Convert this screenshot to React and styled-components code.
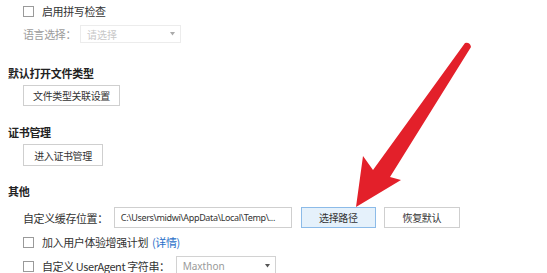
import * as React from "react";
import styled, { createGlobalStyle } from "styled-components";

const GlobalStyle = createGlobalStyle`
	html, body {
		margin: 0;
		padding: 0;
		background: #ffffff;
	}
	body {
		font-family: "Noto Sans CJK SC", "Noto Sans", sans-serif;
		color: #333333;
	}
`;

const Page = styled.div`
	position: relative;
	width: 547px;
	height: 273px;
	overflow: hidden;
	padding-left: 8px;
	box-sizing: border-box;
	display: flex;
	flex-direction: column;
`;

const Row = styled.div`
	display: flex;
	align-items: center;
	height: ${({ $h }) => $h}px;
	margin-top: ${({ $mt }) => $mt || 0}px;
	padding-left: 15px;
	flex-shrink: 0;
`;

const Heading = styled.div`
	display: flex;
	align-items: center;
	height: 16px;
	margin-top: ${({ $mt }) => $mt}px;
	font-size: 11px;
	font-weight: 700;
	color: #222222;
	letter-spacing: -0.3px;
	flex-shrink: 0;
`;

const Box = styled.span`
	width: 11px;
	height: 11px;
	border: 1px solid #9a9a9a;
	background: #ffffff;
	box-sizing: border-box;
	margin-right: 8px;
	flex-shrink: 0;
`;

const Label = styled.span`
	font-size: 11px;
	color: ${({ $muted }) => ($muted ? "#9c9c9c" : "#333333")};
	letter-spacing: -0.4px;
	white-space: nowrap;
	margin-right: ${({ $mr }) => $mr || 0}px;
`;

const Link = styled.span`
	color: #2a6fc9;
	margin-left: 4px;
`;

const Select = styled.div`
	display: flex;
	align-items: center;
	justify-content: space-between;
	width: ${({ $w }) => $w}px;
	height: ${({ $h }) => $h}px;
	border: 1px solid ${({ $light }) => ($light ? "#ececec" : "#d2d2d2")};
	box-sizing: border-box;
	padding: 0 5px 0 6px;
	font-size: 10px;
	color: ${({ $light }) => ($light ? "#c8c8c8" : "#9a9a9a")};
	font-family: "Noto Sans", "Noto Sans CJK SC", sans-serif;
	background: #ffffff;
	flex-shrink: 0;
`;

const Button = styled.div`
	display: flex;
	align-items: center;
	justify-content: center;
	width: ${({ $w }) => $w}px;
	height: ${({ $h }) => $h || 21}px;
	margin-left: ${({ $ml }) => $ml || 0}px;
	border: 1px solid ${({ $active }) => ($active ? "#8cbbe8" : "#cfcfcf")};
	background: ${({ $active }) => ($active ? "#e5f1fb" : "#ffffff")};
	box-sizing: border-box;
	font-size: 10px;
	color: #333333;
	letter-spacing: -0.4px;
	white-space: nowrap;
	flex-shrink: 0;
`;

const PathInput = styled.div`
	display: flex;
	align-items: center;
	width: 178px;
	height: 21px;
	border: 1px solid #cfcfcf;
	box-sizing: border-box;
	padding-left: 6px;
	font-family: "Noto Sans", sans-serif;
	font-size: 9px;
	letter-spacing: -0.35px;
	color: #333333;
	white-space: nowrap;
	overflow: hidden;
	flex-shrink: 0;
`;

const Arrow = styled.svg`
	position: absolute;
	left: 0;
	top: 0;
	pointer-events: none;
`;

const Caret = ({ color = "#888" }) => (
	<svg width="5" height="4" viewBox="0 0 5 4">
		<path d="M0 0 H5 L2.5 3.5 Z" fill={color} />
	</svg>
);

export default function App() {
	return (
		<>
			<GlobalStyle />
			<Page>
				<Row $h={22}>
					<Box />
					<Label>启用拼写检查</Label>
				</Row>
				<Row $h={18} $mt={3}>
					<Label $muted $mr={4}>
						语言选择：
					</Label>
					<Select $w={101} $h={18} $light>
						请选择
						<Caret color="#aaa" />
					</Select>
				</Row>

				<Heading $mt={22}>默认打开文件类型</Heading>
				<Row $h={21} $mt={4}>
					<Button $w={97}>文件类型关联设置</Button>
				</Row>

				<Heading $mt={18}>证书管理</Heading>
				<Row $h={22} $mt={4}>
					<Button $w={80} $h={22}>
						进入证书管理
					</Button>
				</Row>

				<Heading $mt={17}>其他</Heading>
				<Row $h={21} $mt={8}>
					<Label $mr={6}>自定义缓存位置：</Label>
					<PathInput>C:\Users\midwi\AppData\Local\Temp\...</PathInput>
					<Button $w={75} $ml={9} $active>
						选择路径
					</Button>
					<Button $w={76} $ml={8}>
						恢复默认
					</Button>
				</Row>
				<Row $h={16} $mt={6}>
					<Box />
					<Label>
						加入用户体验增强计划
						<Link>(详情)</Link>
					</Label>
				</Row>
				<Row $h={20} $mt={6}>
					<Box />
					<Label $mr={6}>自定义 UserAgent 字符串：</Label>
					<Select $w={100} $h={20}>
						Maxthon
						<Caret color="#555" />
					</Select>
				</Row>

				<Arrow width="547" height="273" viewBox="0 0 547 273">
					<path
						d="M465 43 Q470 42 471 47 L390 177 L401 180 L356 207 L363 156 L373 170 Z"
						fill="#e3202a"
					/>
				</Arrow>
			</Page>
		</>
	);
}
